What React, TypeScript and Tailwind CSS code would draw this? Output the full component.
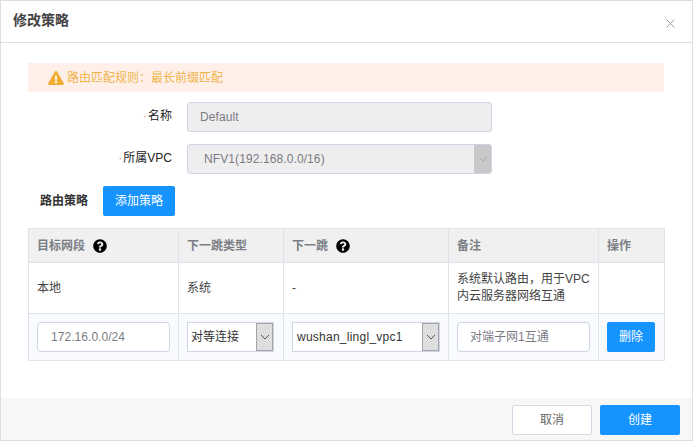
import { FaQuestionCircle, FaExclamationTriangle } from "react-icons/fa";

const font = "font-['Liberation_Sans','Noto_Sans_CJK_SC',sans-serif]";

function Chevron({ color }: { color: string }) {
  return (
    <svg width="10" height="6" viewBox="0 0 10 6" fill="none">
      <path d="M1 1l4 4 4-4" stroke={color} strokeWidth="1" />
    </svg>
  );
}

function TableSelect({ label, width, textClass }: { label: string; width: string; textClass: string }) {
  return (
    <div className={`flex h-[30px] ${width} border border-[#ccd5e3] bg-white`}>
      <div className={`flex-1 flex items-center text-[#333] ${textClass}`}>{label}</div>
      <div className="w-[17px] flex items-center justify-center border border-[#a5a5a5] bg-[#dedede]">
        <Chevron color="#555" />
      </div>
    </div>
  );
}

function Th({ children, className = "" }: { children: React.ReactNode; className?: string }) {
  return (
    <th className={`border border-[#dfe4ec] bg-[#f0f0f0] px-[8px] text-left font-bold text-[#7b7f85] text-[12px] ${className}`}>
      <div className="flex items-center gap-[8px]">{children}</div>
    </th>
  );
}

function Td({ children, className = "" }: { children?: React.ReactNode; className?: string }) {
  return <td className={`border border-[#dfe4ec] px-[8px] text-[#444] text-[12px] ${className}`}>{children}</td>;
}

export default function App() {
  return (
    <div className={`w-[693px] h-[441px] flex flex-col bg-white border border-[#dedede] overflow-hidden ${font}`}>
      <div className="h-[42px] shrink-0 flex items-center justify-between pl-[12px] pr-[16px] border-b border-[#dfdfe6]">
        <span className="text-[14px] font-bold text-[#444] -mt-[3px]">修改策略</span>
        <svg width="9" height="9" viewBox="0 0 9 9" className="mt-[3px] mr-[1px]" fill="none">
          <path d="M0.5 0.5l8 8M8.5 0.5l-8 8" stroke="#9a9ca3" strokeWidth="1" />
        </svg>
      </div>

      <div className="flex-1 flex flex-col pl-[27px] pr-[28px] pt-[20px]">
        <div className="h-[29px] flex items-center pl-[20px] gap-[3px] bg-[#fef0e9] text-[12px] text-[#f0b44c]">
          <FaExclamationTriangle className="w-[16px] h-[14px] text-[#f0ad30]" />
          <span>路由匹配规则：最长前缀匹配</span>
        </div>

        <div className="flex items-center mt-[10px] h-[30px]">
          <div className="w-[144px] text-right text-[12px] text-[#222] -mt-[3px]">
            <span className="text-[#e88] mr-[1px]">·</span>名称
          </div>
          <div className="ml-[15px] w-[305px] h-[30px] flex items-center pl-[12px] rounded-[3px] border border-[#ccd5e3] bg-[#eeeeee] text-[12px] text-[#7b7b85] tracking-[0.1px]">
            Default
          </div>
        </div>

        <div className="flex items-center mt-[12px] h-[30px]">
          <div className="w-[144px] text-right text-[12px] text-[#222] -mt-[3px]">
            <span className="text-[#e88] mr-[1px]">·</span>所属VPC
          </div>
          <div className="ml-[15px] w-[305px] h-[30px] flex rounded-[3px] border border-[#ccd5e3] bg-[#eeeeee] overflow-hidden">
            <div className="flex-1 flex items-center pl-[16px] text-[12px] text-[#7b7b85] tracking-[0.1px]">NFV1(192.168.0.0/16)</div>
            <div className="w-[17px] flex items-center justify-center bg-[#c8c8c8]">
              <Chevron color="#a8a8a8" />
            </div>
          </div>
        </div>

        <div className="flex items-center mt-[12px] h-[30px]">
          <div className="w-[75px] pl-[12px] text-[12px] font-bold text-[#333]">路由策略</div>
          <div className="w-[72px] h-[30px] flex items-center justify-center rounded-[2px] bg-[#1593ff] text-white text-[12px]">
            添加策略
          </div>
        </div>

        <table className="mt-[12px] w-[636px] table-fixed border-collapse">
          <colgroup>
            <col className="w-[150px]" />
            <col className="w-[105px]" />
            <col className="w-[165px]" />
            <col className="w-[150px]" />
            <col className="w-[66px]" />
          </colgroup>
          <thead>
            <tr className="h-[34px]">
              <Th>目标网段<FaQuestionCircle className="w-[14px] h-[14px] text-black" /></Th>
              <Th>下一跳类型</Th>
              <Th>下一跳<FaQuestionCircle className="w-[14px] h-[14px] text-black" /></Th>
              <Th>备注</Th>
              <Th>操作</Th>
            </tr>
          </thead>
          <tbody>
            <tr className="h-[51px]">
              <Td>本地</Td>
              <Td>系统</Td>
              <Td>-</Td>
              <Td className="leading-[17px]">系统默认路由，用于VPC内云服务器网络互通</Td>
              <Td />
            </tr>
            <tr className="h-[47px] bg-[#f8fafd]">
              <Td>
                <div className="w-[133px] h-[30px] flex items-center pl-[13px] rounded-[4px] border border-[#ccd5e3] bg-white text-[#7b7b85] tracking-[0.05px]">
                  172.16.0.0/24
                </div>
              </Td>
              <Td>
                <TableSelect label="对等连接" width="w-[87px]" textClass="pl-[3px] text-[12px]" />
              </Td>
              <Td>
                <TableSelect label="wushan_lingl_vpc1" width="w-[148px]" textClass="pl-[4px] text-[12px] tracking-[0.25px]" />
              </Td>
              <Td>
                <div className="w-[133px] h-[30px] flex items-center pl-[12px] rounded-[4px] border border-[#ccd5e3] bg-white text-[#7b7b85]">
                  对端子网1互通
                </div>
              </Td>
              <Td>
                <div className="w-[48px] h-[30px] flex items-center justify-center rounded-[2px] bg-[#1593ff] text-white">
                  删除
                </div>
              </Td>
            </tr>
          </tbody>
        </table>
      </div>

      <div className="h-[42px] shrink-0 flex items-start justify-end gap-[8px] pt-[7px] pr-[12px] bg-[#f7f7f7]">
        <div className="w-[80px] h-[30px] flex items-center justify-center rounded-[2px] border border-[#d5dbe6] bg-white text-[12px] text-[#666]">
          取消
        </div>
        <div className="w-[80px] h-[30px] flex items-center justify-center rounded-[2px] bg-[#1593ff] text-white text-[12px]">
          创建
        </div>
      </div>
    </div>
  );
}
